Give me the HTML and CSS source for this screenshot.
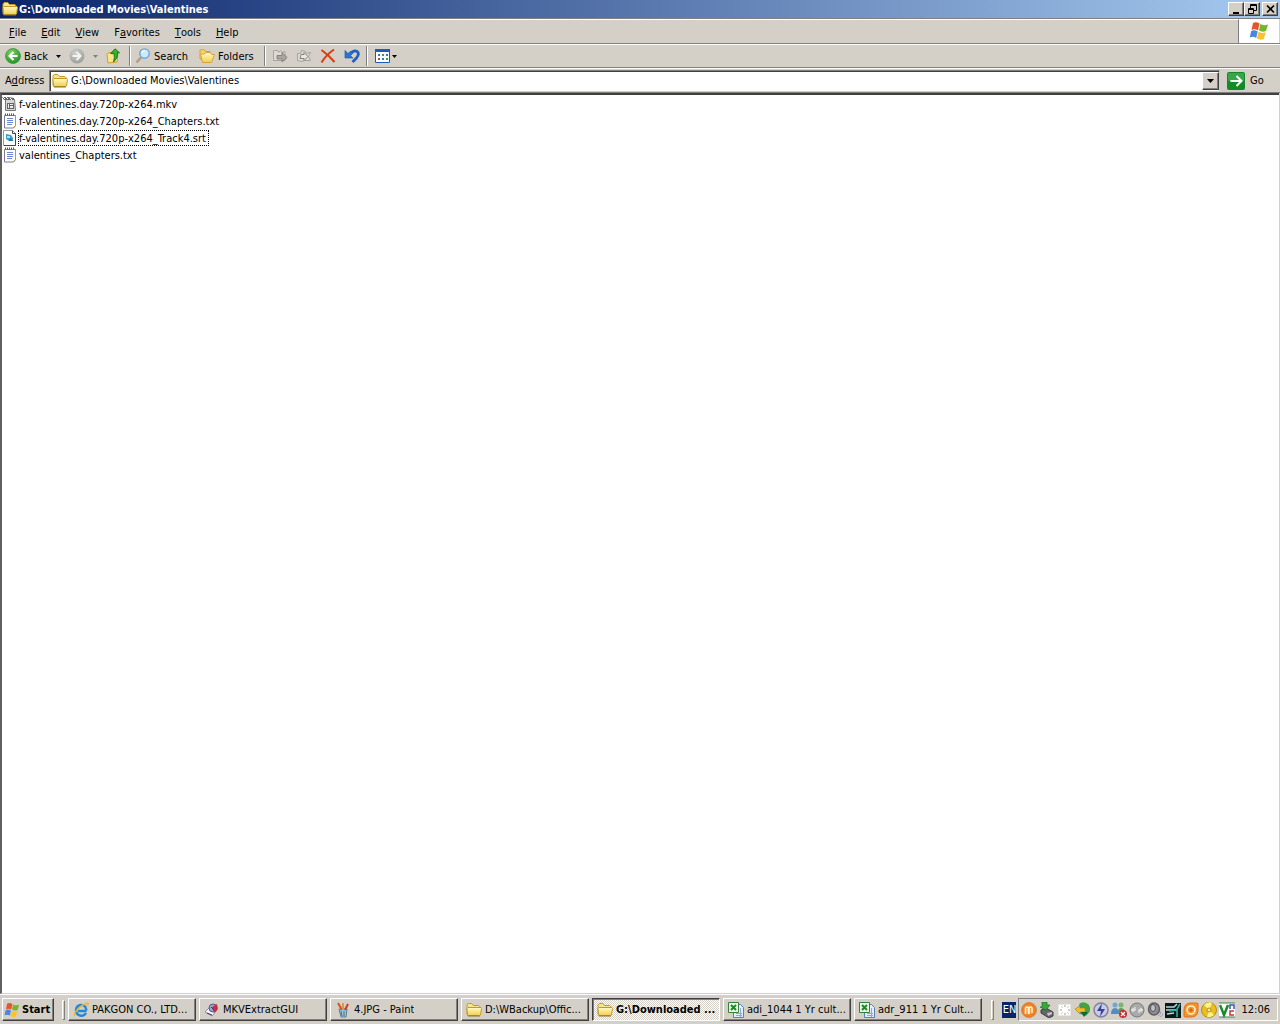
FILE: index.html
```html
<!DOCTYPE html>
<html lang="en">
<head>
    <meta charset="UTF-8">
    <meta name="viewport" content="width=device-width, initial-scale=1.0">
    <title>G:\Downloaded Movies\Valentines</title>
    <link rel="stylesheet" href="styles.css">
</head>
<body>

    <!-- Shared icons -->
    <svg class="sprite" width="0" height="0" aria-hidden="true">
        <defs>
            <linearGradient id="folderFill" x1="0" y1="0" x2="0" y2="1">
                <stop offset="0" stop-color="#fffbc4"/>
                <stop offset="1" stop-color="#f2cd50"/>
            </linearGradient>
            <radialGradient id="greenFill" cx="0.4" cy="0.3" r="0.8">
                <stop offset="0" stop-color="#7fd46c"/>
                <stop offset="1" stop-color="#188a18"/>
            </radialGradient>
            <radialGradient id="greyFill" cx="0.4" cy="0.3" r="0.8">
                <stop offset="0" stop-color="#d0d0cc"/>
                <stop offset="1" stop-color="#989894"/>
            </radialGradient>
            <radialGradient id="orangeFill">
                <stop offset="0" stop-color="#ffb04a"/>
                <stop offset="1" stop-color="#e8731a"/>
            </radialGradient>
        </defs>
        <symbol id="folder" viewBox="0 0 16 16">
            <path d="M1 12.500V3l1.200-1.500h3.600L7.500 3.500h5.300L14 4.800v7.700z" fill="#f8e48a" stroke="#c29a2c"/>
            <path d="M1.500 13.500 1 6.500l1-1h13l.5 1-1 6.500-1 .5z" fill="url(#folderFill)" stroke="#c29a2c"/>
            <path d="M2 14h12" stroke="#8f7424"/>
        </symbol>
        <symbol id="windows" viewBox="0 0 20 20">
            <path d="M4 2q3-1.500 6.500 0.500l-1.500 7Q5.500 7.500 2.500 9z" fill="#e8542a"/>
            <path d="M11.300 3q3 2 7.700 0.500l-2 6.500q-4 1.500-7-0.500z" fill="#74b72e"/>
            <path d="M2.200 10q3-1.500 6.500 0.500l-1.500 6.500q-3-2-6.500-0.500z" fill="#4886e0"/>
            <path d="M9.500 10.800q3 2 7.200 0.500l-1.800 6.700q-3.500 1.500-7-0.500z" fill="#f7c52b"/>
        </symbol>
        <symbol id="text-file" viewBox="0 0 16 16">
            <path d="M2.500 2.500h11v10l-2 2.500h-9z" fill="#fff" stroke="#7c7c96"/>
            <path d="M3 1.500h1M5 1.500h1M7 1.500h1M9 1.500h1M11 1.500h1" stroke="#555" stroke-width="2"/>
            <path d="M5 5.500h6M5 7.500h6M5 9.500h6M5 11.500h5" stroke="#6f86d8"/>
            <path d="M13.500 3v9.500l-2 2.500" fill="none" stroke="#b59a4a"/>
        </symbol>
        <symbol id="excel" viewBox="0 0 16 16">
            <path d="M5.500 2.500h7l3 3v10h-10z" fill="#e3edfb" stroke="#5b7cbd"/>
            <path d="M8 11.500h6M8 13.500h6M12.500 6v9" stroke="#8ba8dc"/>
            <path d="M0.500 0.500h10v10H0.500z" fill="#e9f6e4" stroke="#338238"/>
            <path d="M3 3l5 5M8 3 3 8" stroke="#228529" stroke-width="2"/>
        </symbol>
    </svg>

    <main class="window">
        <header class="title-bar">
            <svg class="icon"><use href="#folder"/></svg>
            <h1>G:\Downloaded Movies\Valentines</h1>
            <div class="window-controls">
                <button type="button" aria-label="Minimize">
                    <svg width="11" height="11"><path d="M2 9h6" stroke="#000" stroke-width="2"/></svg>
                </button>
                <button type="button" aria-label="Restore">
                    <svg width="11" height="11" fill="none" stroke="#000"><path d="M3.500 4V0.500h6v6H7M3 1.500h7M1.500 4.500h5v5h-5zM1 5.500h6"/></svg>
                </button>
                <button type="button" class="close" aria-label="Close">
                    <svg width="11" height="11"><path d="M2 1.500l7 7M9 1.500l-7 7" stroke="#000" stroke-width="1.600"/></svg>
                </button>
            </div>
        </header>

        <nav class="menu-row">
            <div class="menu-bar">
                <button type="button"><u>F</u>ile</button>
                <button type="button"><u>E</u>dit</button>
                <button type="button"><u>V</u>iew</button>
                <button type="button">F<u>a</u>vorites</button>
                <button type="button"><u>T</u>ools</button>
                <button type="button"><u>H</u>elp</button>
            </div>
            <div class="brand"><svg width="20" height="20"><use href="#windows"/></svg></div>
        </nav>

        <!-- Standard buttons -->
        <div class="toolbar">
            <button type="button" class="back">
                <svg class="icon" viewBox="0 0 16 16"><circle cx="8" cy="8" r="7.500" fill="url(#greenFill)" stroke="#3c9a3a" stroke-width="0.800"/><path d="M8.500 4 4.500 8l4 4M5 8h7.500" fill="none" stroke="#fff" stroke-width="2"/></svg>
                <span>Back</span>
                <svg class="arrow" viewBox="0 0 5 3"><path d="M0 0h5L2.500 3z"/></svg>
            </button>
            <button type="button" class="forward" aria-label="Forward" disabled>
                <svg class="icon" viewBox="0 0 16 16"><circle cx="8" cy="8" r="7.500" fill="url(#greyFill)"/><path d="M7.500 4l4 4-4 4M3.500 8H11" fill="none" stroke="#f4f4f0" stroke-width="2"/></svg>
                <svg class="arrow" viewBox="0 0 5 3"><path d="M0 0h5L2.500 3z" fill="#808080"/></svg>
            </button>
            <button type="button" class="up" aria-label="Up">
                <svg class="icon" viewBox="0 0 16 16"><path d="M1 6.500 2 5l3-.5 1 1.500 6-1-1 9-9 1z" fill="#fae58a" stroke="#cba037"/><path d="M4.500 5.500 9 .8l4.500 4-2-.3q1 5.500-4 9.500 1.500-4 .5-8.700z" fill="#35b52b" stroke="#187d18"/></svg>
            </button>
            <span class="divider"></span>
            <button type="button" class="search">
                <svg class="icon" viewBox="0 0 16 16"><path d="M1.500 14.500 6 9.500" stroke="#b79a82" stroke-width="2.500"/><circle cx="9.500" cy="5.500" r="4.700" fill="#c8ebff" stroke="#6c9fd2" stroke-width="1.300"/><path d="M6.800 5q.6-2 2.800-2.200" fill="none" stroke="#fff" stroke-width="1.500"/></svg>
                <span>Search</span>
            </button>
            <button type="button" class="folders">
                <svg class="icon" viewBox="0 0 16 16"><path d="M1 11V2l4-.5 1.500 2H11V11z" fill="#f5d36b" stroke="#d3a53c"/><path d="M3.500 14.500 1.500 6h4l1-1.500h5l1 2h3l-3 8z" fill="url(#folderFill)" stroke="#d3a53c"/></svg>
                <span>Folders</span>
            </button>
            <span class="divider"></span>
            <div class="edit-tools">
                <button type="button" aria-label="Move To">
                    <svg class="icon" viewBox="0 0 16 16"><path d="M1.500 12.500V2.500h4l1 2 2-2 1.500 2 3-1v9z" fill="#dedbd4" stroke="#a7a49d"/><path d="M5 7.500h5v-3l5 5-5 4.500v-3H5z" fill="#aaa7a0" stroke="#85827c"/></svg>
                </button>
                <button type="button" aria-label="Copy To">
                    <svg class="icon" viewBox="0 0 16 16"><path d="M1.500 12.500v-7h3l1-3 4 1 1 2 4-1-2 4 2 4H8l-2 1z" fill="#dedbd4" stroke="#a7a49d"/><path d="M5 6.500h3v-2l4 4-4 4v-2H4z" fill="#e9e6df" stroke="#85827c"/></svg>
                </button>
                <button type="button" aria-label="Delete">
                    <svg class="icon" viewBox="0 0 16 16"><path d="M1.500 2q7 5 13 12M14 1.500Q6 7 1.500 14.500" fill="none" stroke="#dc3a13" stroke-width="2"/></svg>
                </button>
                <button type="button" aria-label="Undo">
                    <svg class="icon" viewBox="0 0 16 16"><path d="M5.500 6.500Q10 1.500 13 3.500T12.500 10L8.500 14" fill="none" stroke="#2360be" stroke-width="2.800"/><path d="M1 2.500V10h8L6.500 7.700 9 5 6.500 3.500 4 5.500z" fill="#2b74d2" stroke="#1f5bb4" stroke-width="0.700"/></svg>
                </button>
            </div>
            <span class="divider"></span>
            <button type="button" class="views" aria-label="Views">
                <svg class="icon" viewBox="0 0 16 16"><path d="M.5 2.500h14v12H.5z" fill="#fff" stroke="#1c5bb8"/><path d="M0 2.500h15" stroke="#1c5bb8" stroke-width="3"/><path d="M3 7h2M11 7h2M7 11h2" stroke="#3a74c8" stroke-width="2"/><path d="M7 7h2M11 11h2" stroke="#3c9b55" stroke-width="2"/><path d="M3 11h2" stroke="#b5443a" stroke-width="2"/></svg>
                <svg class="arrow" viewBox="0 0 5 3"><path d="M0 0h5L2.500 3z"/></svg>
            </button>
        </div>

        <form class="address-bar">
            <label for="address">A<u>d</u>dress</label>
            <div class="address-box">
                <svg class="icon"><use href="#folder"/></svg>
                <input type="text" id="address" value="G:\Downloaded Movies\Valentines">
                <button type="button" class="drop" aria-label="Address history">
                    <svg width="7" height="4"><path d="M0 0h7L3.500 4z"/></svg>
                </button>
            </div>
            <button type="button" class="go">
                <svg width="18" height="18" viewBox="0 0 18 18"><rect width="18" height="18" rx="2" fill="#128a28"/><rect x="1" y="1" width="16" height="8" rx="1" fill="#39a548"/><path d="M9.500 4l5 5-5 5M3.500 9H13" fill="none" stroke="#fff" stroke-width="2"/></svg>
                <span>Go</span>
            </button>
        </form>

        <ul class="file-list">
            <li>
                <svg class="icon" viewBox="0 0 16 16"><path d="M3.500 3.500h9l1 11h-10z" fill="#d7d7d7" stroke="#777"/><path d="M0 1h6l6 1v2H2z" fill="#666"/><path d="M1 1l2 2M4 1l2 2M8 2l2 2" stroke="#fff"/><path d="M5 7h7v6H5z" fill="#666"/><path d="M6 8h1v4H6zM8 8h3v1H8zM8 10h3v2H8z" fill="#eee"/></svg>
                <a href="#">f-valentines.day.720p-x264.mkv</a>
            </li>
            <li>
                <svg class="icon"><use href="#text-file"/></svg>
                <a href="#">f-valentines.day.720p-x264_Chapters.txt</a>
            </li>
            <li>
                <svg class="icon" viewBox="0 0 16 16"><path d="M1.500.5h9l3 3v12h-12z" fill="#fff" stroke="#999"/><path d="M10.500.5v3h3v12H2" fill="none" stroke="#444"/><path d="M4 4l5 1 2 3v3H7L4 9z" fill="#3c9fc4"/><path d="M5 6h3v2H5z" fill="#a9e1ef"/><path d="M8 8l3 3H7z" fill="#2668a8"/></svg>
                <a href="#" class="focused">f-valentines.day.720p-x264_Track4.srt</a>
            </li>
            <li>
                <svg class="icon"><use href="#text-file"/></svg>
                <a href="#">valentines_Chapters.txt</a>
            </li>
        </ul>
    </main>

    <footer class="taskbar">
        <button type="button" class="start">
            <svg class="icon"><use href="#windows"/></svg>
            <span>Start</span>
        </button>
        <span class="grip"></span>
        <div class="tasks">
            <button type="button">
                <svg class="icon" viewBox="0 0 16 16"><path d="M13.500 9H5M13 11q-2 3.500-6 2.500T3 8q.5-4.500 5-5t5.500 5.500" fill="none" stroke="#2389d5" stroke-width="2.500"/><path d="M2 14q-2-2 3-7t10-6q1 1-1 3" fill="none" stroke="#e9b936" stroke-width="1.300"/></svg>
                <span>PAKGON CO., LTD...</span>
            </button>
            <button type="button">
                <svg class="icon" viewBox="0 0 16 16"><path d="M1 10l5-5 7 3-5 6z" fill="#f5f5ff" stroke="#8c8ca2"/><circle cx="9" cy="6" r="4" fill="#9ba7d6" stroke="#53598c"/><path d="M8 5l5-3 1 5-4 4z" fill="#c92c43"/><path d="M3 11l5 2M7 5l3 3" stroke="#3a3a5c"/></svg>
                <span>MKVExtractGUI</span>
            </button>
            <button type="button">
                <svg class="icon" viewBox="0 0 16 16"><path d="M4 7h8l-1 8H6z" fill="#9fc3e5" stroke="#5b7896"/><path d="M7 8 3 1" stroke="#d8502a" stroke-width="2"/><path d="M8 8V1" stroke="#df9c25" stroke-width="2"/><path d="M10 8l3-6" stroke="#c33c2e" stroke-width="2"/><path d="M6 9l1 5M9 9v5" stroke="#3e7f48"/></svg>
                <span>4.JPG - Paint</span>
            </button>
            <button type="button">
                <svg class="icon"><use href="#folder"/></svg>
                <span>D:\WBackup\Offic...</span>
            </button>
            <button type="button" class="active">
                <svg class="icon"><use href="#folder"/></svg>
                <span>G:\Downloaded ...</span>
            </button>
            <button type="button">
                <svg class="icon"><use href="#excel"/></svg>
                <span>adi_1044 1 Yr cult...</span>
            </button>
            <button type="button">
                <svg class="icon"><use href="#excel"/></svg>
                <span>adr_911 1 Yr Cult...</span>
            </button>
        </div>
        <span class="grip"></span>
        <button type="button" class="language">EN</button>
        <div class="tray">
            <svg class="icon" viewBox="0 0 16 16"><circle cx="8" cy="8" r="7.500" fill="url(#orangeFill)" stroke="#d88b48"/><path d="M4.500 12V6q1.500-2 3 0v6M8 12V6q1.500-2 3 0v5" fill="none" stroke="#fff2dc" stroke-width="1.500"/></svg>
            <svg class="icon" viewBox="0 0 16 16"><path d="M2 8l5-2 7 4v4l-4 2-8-5z" fill="#62666a" stroke="#3e4143"/><path d="M8 11l5-1v2l-4 2z" fill="#c4c7c9"/><path d="M3 0h5v3h3L7 8 1 5h2z" fill="#39a83a" stroke="#1e6d25" stroke-width="0.700"/></svg>
            <svg class="icon" viewBox="0 0 16 16"><path d="M1.500 2.500h12v11h-12z" fill="#fff" stroke="#e6e6e6"/><path d="M8 3v2M8 11v2M3 8h2M11 8h2M4.500 4.500l1 1M10.500 10.500l1 1M11.500 4.500l-1 1M5.500 10.500l-1 1" stroke="#999"/></svg>
            <svg class="icon" viewBox="0 0 16 16"><circle cx="9" cy="7" r="6" fill="#2f83c3"/><path d="M4 2q5-4 10 1l1 6-4 5-3-4V7z" fill="#42a540"/><path d="M0 7l5-3v2h5v4H5v2z" fill="#f0be27" stroke="#af841a" stroke-width="0.700"/><path d="M6 10h7l-4 5z" fill="#146722"/></svg>
            <svg class="icon" viewBox="0 0 16 16"><circle cx="8" cy="8" r="7" fill="#c7cbe6" stroke="#828299" stroke-width="1.500"/><path d="M9 1 4 9h4l-1 6 5-8H8z" fill="#3942a0"/></svg>
            <svg class="icon" viewBox="0 0 16 16"><circle cx="4" cy="3" r="2.500" fill="#6ba9d5"/><path d="M0 12q0-6 4-6t4 6z" fill="#4c8fc4"/><circle cx="10" cy="3" r="2.500" fill="#78b674"/><path d="M7 10q0-4 3-4t4 4z" fill="#569e57"/><circle cx="12" cy="12" r="4" fill="#c22c2c"/><path d="M10 10l4 4M14 10l-4 4" stroke="#fff" stroke-width="1.300"/></svg>
            <svg class="icon" viewBox="0 0 16 16"><circle cx="8" cy="8" r="7" fill="#aaa" stroke="#777"/><path d="M2 8h4V5M14 8h-4v3M4 6v4M12 6v4" fill="none" stroke="#e9e9e9" stroke-width="1.300"/></svg>
            <svg class="icon" viewBox="0 0 16 16"><ellipse cx="7" cy="7" rx="5.500" ry="6" fill="#8c8d95" stroke="#5c5d66" stroke-width="1.500"/><ellipse cx="6" cy="6" rx="2.500" ry="3.500" fill="#c2c2ca" stroke="#555"/><path d="M11 14q3-1 3-5M13 15q3-1 3-4" fill="none" stroke="#a0a0c0"/></svg>
            <svg class="icon" viewBox="0 0 16 16"><path d="M0 1h16v15H0z" fill="#07191c"/><path d="M1 5h8l3-3M1 8h10M2 12l7-1" stroke="#bfd9cd" stroke-width="1.500" fill="none"/><path d="M15 2l-3 5v8M12 8l-8 1" stroke="#37b2aa" stroke-width="1.500" fill="none"/></svg>
            <svg class="icon" viewBox="0 0 16 16"><path d="M8 1h6q1 0 1 1v6q0 7-7 7H2q-1 0-1-1V8q0-7 7-7z" fill="#f4932e" stroke="#dc7117"/><circle cx="8" cy="8" r="4" fill="#f4932e" stroke="#fff2c7" stroke-width="1.600"/><circle cx="8" cy="8" r="1.500" fill="#d65f12"/></svg>
            <svg class="icon" viewBox="0 0 16 16"><circle cx="8" cy="8" r="7.500" fill="#e8be20" stroke="#b58d13"/><path d="M8 8 3 3q4-4 8-2z" fill="#fff48b"/><path d="M8 8l5 5q-4 3-7 2z" fill="#fff48b"/><circle cx="8" cy="8" r="2" fill="#f8e99b" stroke="#b38b13"/></svg>
            <svg class="icon" viewBox="0 0 16 16"><path d="M0 1h16v14H0z" fill="#fff"/><path d="M0 1h16M0 15h16" stroke="#438451"/><path d="M1 3l4 10L9 3" fill="none" stroke="#168b2c" stroke-width="2.500"/><path d="M11 7V3h4v4" fill="none" stroke="#3654b1" stroke-width="1.500"/><path d="M15 9h-4v4h4" fill="none" stroke="#c63735" stroke-width="1.500"/></svg>
            <time>12:06</time>
        </div>
    </footer>

</body>
</html>
```
FILE: styles.css
```css
/* General reset */
* {
    margin: 0;
    padding: 0;
    box-sizing: border-box;
}

body {
    display: flex;
    flex-direction: column;
    min-height: 100vh;
    background: #d4d0c8;
    color: #000;
    font-family: Tahoma, "DejaVu Sans Condensed", sans-serif;
    font-size: 11px;
    line-height: 13px;
}

button, input {
    font: inherit;
    color: inherit;
    border: none;
    background: none;
}

button {
    display: flex;
    align-items: center;
    white-space: nowrap;
}

svg {
    display: block;
    flex: none;
}

.sprite {
    position: absolute;
}

.icon {
    width: 16px;
    height: 16px;
}

.arrow {
    width: 5px;
    height: 3px;
}

.window {
    flex: 1;
    display: flex;
    flex-direction: column;
}

/* Title bar */
.title-bar {
    display: flex;
    align-items: center;
    height: 18px;
    padding: 0 2px;
    background: linear-gradient(to right, #0a246a, #a6caf0);
}

.title-bar h1 {
    flex: 1;
    margin-left: 1px;
    color: #fff;
    font-size: 11px;
    font-weight: bold;
}

.window-controls {
    display: flex;
}

.window-controls button,
.drop {
    justify-content: center;
    background: #d4d0c8;
    border: 1px solid;
    border-color: #fff #404040 #404040 #fff;
    box-shadow: inset -1px -1px #808080;
}

.window-controls button {
    width: 16px;
    height: 14px;
}

.window-controls .close {
    margin-left: 2px;
}

/* Menu */
.menu-row {
    display: flex;
    height: 26px;
    border-top: 1px solid #808080;
    border-bottom: 1px solid #808080;
}

.menu-bar {
    flex: 1;
    display: flex;
    padding-left: 1px;
    border-top: 1px solid #fff;
    border-right: 1px solid #808080;
}

.menu-bar button {
    padding: 1px 7px 0 8px;
}

.brand {
    display: flex;
    align-items: center;
    justify-content: center;
    width: 40px;
    margin-right: 1px;
    background: #fff;
}

/* Toolbar */
.toolbar {
    display: flex;
    align-items: center;
    height: 24px;
    padding-left: 5px;
    border-top: 1px solid #fff;
    border-bottom: 1px solid #808080;
}

.back {
    gap: 3px;
    width: 64px;
}

.back .arrow {
    margin-left: auto;
    margin-right: 8px;
}

.forward {
    gap: 8px;
    width: 37px;
}

.up {
    width: 23px;
}

.divider {
    width: 2px;
    height: 20px;
    border-left: 1px solid #808080;
    border-right: 1px solid #fff;
}

.search,
.folders {
    gap: 3px;
    margin-left: 4px;
}

.search {
    width: 60px;
}

.folders {
    width: 65px;
}

.edit-tools {
    display: flex;
    gap: 8px;
    width: 94px;
    margin-left: 6px;
}

.views {
    gap: 1px;
    margin-left: 7px;
}

/* Address bar */
.address-bar {
    display: flex;
    align-items: center;
    height: 25px;
    padding: 0 1px 0 5px;
    border-top: 1px solid #fff;
    border-bottom: 1px solid #808080;
}

.address-bar label {
    width: 44px;
}

.address-box {
    flex: 1;
    display: flex;
    align-items: center;
    height: 22px;
    padding-left: 2px;
    background: #fff;
    border: 1px solid;
    border-color: #808080 #d4d0c8 #d4d0c8 #808080;
    box-shadow: inset 1px 1px #404040;
}

.address-box input {
    flex: 1;
    min-width: 0;
    margin-left: 3px;
    outline: none;
}

.drop {
    width: 17px;
    height: 18px;
}

.go {
    gap: 5px;
    width: 59px;
    padding-left: 7px;
}

/* Files */
.file-list {
    flex: 1;
    display: flex;
    flex-direction: column;
    align-items: flex-start;
    gap: 1px;
    margin-right: 1px;
    padding-top: 1px;
    list-style: none;
    background: #fff;
    border-top: 2px solid #404040;
    border-left: 2px solid #606060;
    border-bottom: 1px solid #d4d0c8;
}

.file-list li {
    display: flex;
    align-items: center;
}

.file-list a {
    padding: 1px 2px 0 0;
    border: 1px solid transparent;
    color: inherit;
    text-decoration: none;
}

.file-list .focused {
    border: 1px dotted #000;
}

/* Taskbar */
.taskbar {
    display: flex;
    align-items: center;
    height: 30px;
    padding: 0 2px;
    border-top: 1px solid #fff;
}

.start,
.tasks button {
    gap: 3px;
    height: 23px;
    border: 1px solid;
    border-color: #fff #404040 #404040 #fff;
    box-shadow: inset -1px -1px #808080;
}

.start {
    width: 52px;
    padding-left: 1px;
    font-weight: bold;
}

.start .icon {
    margin-right: -1px;
}

.grip {
    width: 3px;
    height: 20px;
    margin: 0 3px 0 8px;
    border: 1px solid;
    border-color: #fff #808080 #808080 #fff;
}

.tasks {
    flex: 1;
    display: flex;
    gap: 3px;
}

.tasks button {
    flex: 1;
    min-width: 0;
    max-width: 128px;
    padding-left: 4px;
}

.tasks span {
    overflow: hidden;
}

.tasks .active {
    background: repeating-conic-gradient(#fff 0 25%, #d4d0c8 0 50%) 0 0 / 2px 2px;
    border-color: #404040 #fff #fff #404040;
    box-shadow: inset 1px 1px #808080;
    font-weight: bold;
}

.language {
    width: 14px;
    height: 16px;
    margin: 0 2px 0 5px;
    justify-content: center;
    overflow: hidden;
    background: #0a246a;
    color: #fff;
}

.tray {
    display: flex;
    align-items: center;
    gap: 2px;
    height: 23px;
    padding: 0 7px 0 2px;
    border: 1px solid;
    border-color: #808080 #fff #fff #808080;
}

.tray time {
    margin-left: 4px;
}
```
